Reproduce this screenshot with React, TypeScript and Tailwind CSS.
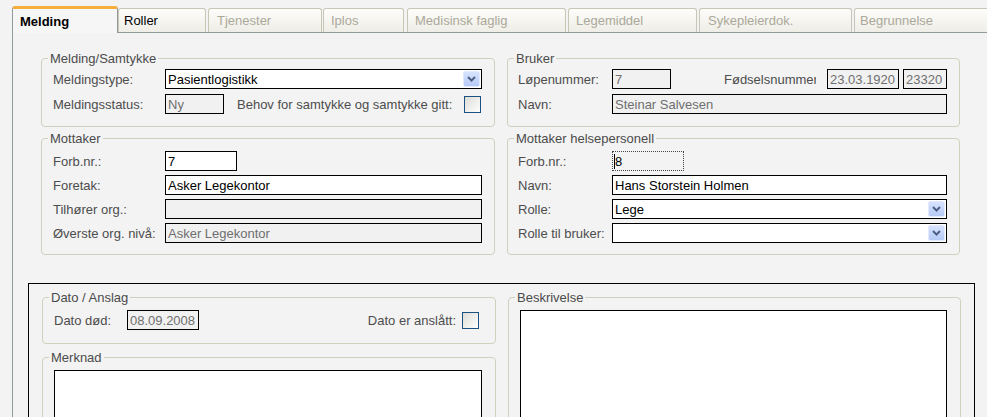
import React from "react";

const Group = ({ title, className = "", children }: { title: string; className?: string; children?: React.ReactNode }) => (
  <fieldset className={`border border-[#d0d0bf] rounded-[4px] min-w-0 ${className}`}>
    <legend className="ml-[6px] px-[2px] leading-[15px] text-[#4b4b4b]">{title}</legend>
    {children}
  </fieldset>
);

const Label = ({ w, children }: { w: string; children: React.ReactNode }) => (
  <span className={`${w} shrink-0 whitespace-nowrap text-[#4d4d4d]`}>{children}</span>
);

const Box = ({ w, ro, className = "", children }: { w: string; ro?: boolean; className?: string; children?: React.ReactNode }) => (
  <div
    className={`${w} ${className} h-[20px] shrink-0 border border-black flex items-center pl-[2px] overflow-hidden whitespace-nowrap ${
      ro ? "bg-[#f1f1f1] text-[#6f6f6f]" : "bg-white text-black"
    }`}
  >
    {children}
  </div>
);

const Combo = ({ value }: { value: string }) => (
  <div className="flex-1 h-[20px] border border-black bg-white flex items-center pl-[2px] pr-[1px] text-black">
    <span className="flex-1 whitespace-nowrap overflow-hidden">{value}</span>
    <span className="w-[17px] h-[16px] rounded-[2px] border border-[#e3eafd] bg-gradient-to-b from-[#d7e3fe] to-[#b6caf7] flex items-center justify-center">
      <svg width="9" height="6" viewBox="0 0 9 6">
        <path d="M1 1 L4.5 4.5 L8 1" stroke="#4d6185" strokeWidth="2" fill="none" />
      </svg>
    </span>
  </div>
);

const Check = ({ className = "" }: { className?: string }) => (
  <span className={`w-[17px] h-[17px] shrink-0 border border-[#1c5180] bg-gradient-to-br from-[#dcdcd7] to-[#ffffff] ${className}`} />
);

const tabs = [
  { t: "Roller", cls: "w-[88px] ml-0 pl-[5px] text-black" },
  { t: "Tjenester", cls: "w-[114px] ml-[2px] pl-[8px] text-[#aca899]" },
  { t: "Iplos", cls: "w-[81px] ml-[1px] pl-[7px] text-[#aca899]" },
  { t: "Medisinsk faglig", cls: "w-[159px] ml-[3px] pl-[7px] text-[#aca899]" },
  { t: "Legemiddel", cls: "w-[129px] ml-[2px] pl-[7px] text-[#aca899]" },
  { t: "Sykepleierdok.", cls: "w-[153px] ml-[2px] pl-[8px] text-[#aca899]" },
  { t: "Begrunnelse", cls: "w-[150px] ml-[2px] pl-[5px] text-[#aca899]" },
];

export default function App() {
  return (
    <div className="w-[987px] h-[417px] overflow-hidden bg-[#f3f3f3] font-['Liberation_Sans',Arial,sans-serif] text-[13px] leading-[15px] text-[#4b4b4b]">
      {/* tab strip */}
      <div className="h-[32px] flex items-end pl-[12px]">
        <div className="relative z-10 w-[106px] h-[27px] -mb-px shrink-0 bg-[#f6f6f6] border-x border-[#919b9c] border-t-[3px] border-t-[#f6ae3c] rounded-t-[3px] pl-[7px] font-bold text-black flex items-center">
          Melding
        </div>
        {tabs.map((tb) => (
          <div
            key={tb.t}
            className={`${tb.cls} h-[24px] shrink-0 border border-b-0 border-[#c9c6b6] rounded-t-[3px] bg-gradient-to-b from-[#fdfdfb] to-[#eeede6] flex items-center whitespace-nowrap`}
          >
            {tb.t}
          </div>
        ))}
      </div>

      {/* panel */}
      <div className="ml-[12px] h-[400px] border-l border-t border-[#919b9c] pt-[18px]">
        <div className="ml-[28px] grid grid-cols-[454px_453px] gap-x-[12px] gap-y-[4px]">
          <Group title="Melding/Samtykke">
            <div className="pt-[3px] pb-[12px] pl-[11px] pr-[12px] flex flex-col gap-[5px]">
              <div className="flex items-center h-[20px]">
                <Label w="w-[112px]">Meldingstype:</Label>
                <Combo value="Pasientlogistikk" />
              </div>
              <div className="flex items-center h-[20px]">
                <Label w="w-[112px]">Meldingsstatus:</Label>
                <Box w="w-[59px]" ro>
                  Ny
                </Box>
                <span className="ml-[13px] whitespace-nowrap text-[#4d4d4d]">Behov for samtykke og samtykke gitt:</span>
                <Check className="ml-auto mr-[1px]" />
              </div>
            </div>
          </Group>

          <Group title="Bruker">
            <div className="pt-[3px] pb-[12px] pl-[10px] pr-[12px] flex flex-col gap-[5px]">
              <div className="flex items-center h-[20px]">
                <Label w="w-[94px]">Løpenummer:</Label>
                <Box w="w-[59px]" ro>
                  7
                </Box>
                <span className="ml-[53px] w-[92px] shrink-0 overflow-hidden whitespace-nowrap text-[#4d4d4d]">Fødselsnummer</span>
                <Box w="w-[72px]" className="ml-[11px]" ro>
                  23.03.1920
                </Box>
                <Box w="w-[44px]" className="ml-[4px]" ro>
                  23320
                </Box>
              </div>
              <div className="flex items-center h-[20px]">
                <Label w="w-[94px]">Navn:</Label>
                <Box w="flex-1" ro>
                  Steinar Salvesen
                </Box>
              </div>
            </div>
          </Group>

          <Group title="Mottaker">
            <div className="pt-[5px] pb-[11px] pl-[11px] pr-[12px] flex flex-col gap-[4px]">
              <div className="flex items-center h-[20px]">
                <Label w="w-[112px]">Forb.nr.:</Label>
                <Box w="w-[72px]">7</Box>
              </div>
              <div className="flex items-center h-[20px]">
                <Label w="w-[112px]">Foretak:</Label>
                <Box w="flex-1">Asker Legekontor</Box>
              </div>
              <div className="flex items-center h-[20px]">
                <Label w="w-[112px]">Tilhører org.:</Label>
                <Box w="flex-1" ro />
              </div>
              <div className="flex items-center h-[20px]">
                <Label w="w-[112px]">Øverste org. nivå:</Label>
                <Box w="flex-1" ro>
                  Asker Legekontor
                </Box>
              </div>
            </div>
          </Group>

          <Group title="Mottaker helsepersonell">
            <div className="pt-[5px] pb-[11px] pl-[10px] pr-[12px] flex flex-col gap-[4px]">
              <div className="flex items-center h-[20px]">
                <Label w="w-[94px]">Forb.nr.:</Label>
                <div className="w-[72px] h-[20px] border border-dotted border-[#444] flex items-center pl-[1px] text-black">
                  <span className="w-px h-[15px] bg-black" />
                  <span>8</span>
                </div>
              </div>
              <div className="flex items-center h-[20px]">
                <Label w="w-[94px]">Navn:</Label>
                <Box w="flex-1">Hans Storstein Holmen</Box>
              </div>
              <div className="flex items-center h-[20px]">
                <Label w="w-[94px]">Rolle:</Label>
                <Combo value="Lege" />
              </div>
              <div className="flex items-center h-[20px]">
                <Label w="w-[94px]">Rolle til bruker:</Label>
                <Combo value="" />
              </div>
            </div>
          </Group>
        </div>

        {/* lower framed section */}
        <div className="ml-[15px] mt-[28px] w-[947px] h-[200px] border border-black pt-[6px] pl-[13px] grid grid-cols-[454px_453px] gap-x-[12px] items-stretch">
          <div className="flex flex-col gap-[6px]">
            <Group title="Dato / Anslag">
              <div className="pt-[5px] pb-[13px] pl-[11px] pr-[13px] flex items-center h-[38px]">
                <Label w="w-[73px]">Dato død:</Label>
                <Box w="w-[72px]" ro>
                  08.09.2008
                </Box>
                <span className="ml-auto whitespace-nowrap text-[#4d4d4d]">Dato er anslått:</span>
                <Check className="ml-[6px] mr-[3px]" />
              </div>
            </Group>
            <Group title="Merknad" className="flex-1">
              <div className="pt-[5px] pl-[11px] pr-[13px]">
                <div className="h-[120px] bg-white border border-black" />
              </div>
            </Group>
          </div>
          <Group title="Beskrivelse">
            <div className="pt-[5px] pl-[11px] pr-[13px]">
              <div className="h-[160px] bg-white border border-black" />
            </div>
          </Group>
        </div>
      </div>
    </div>
  );
}
